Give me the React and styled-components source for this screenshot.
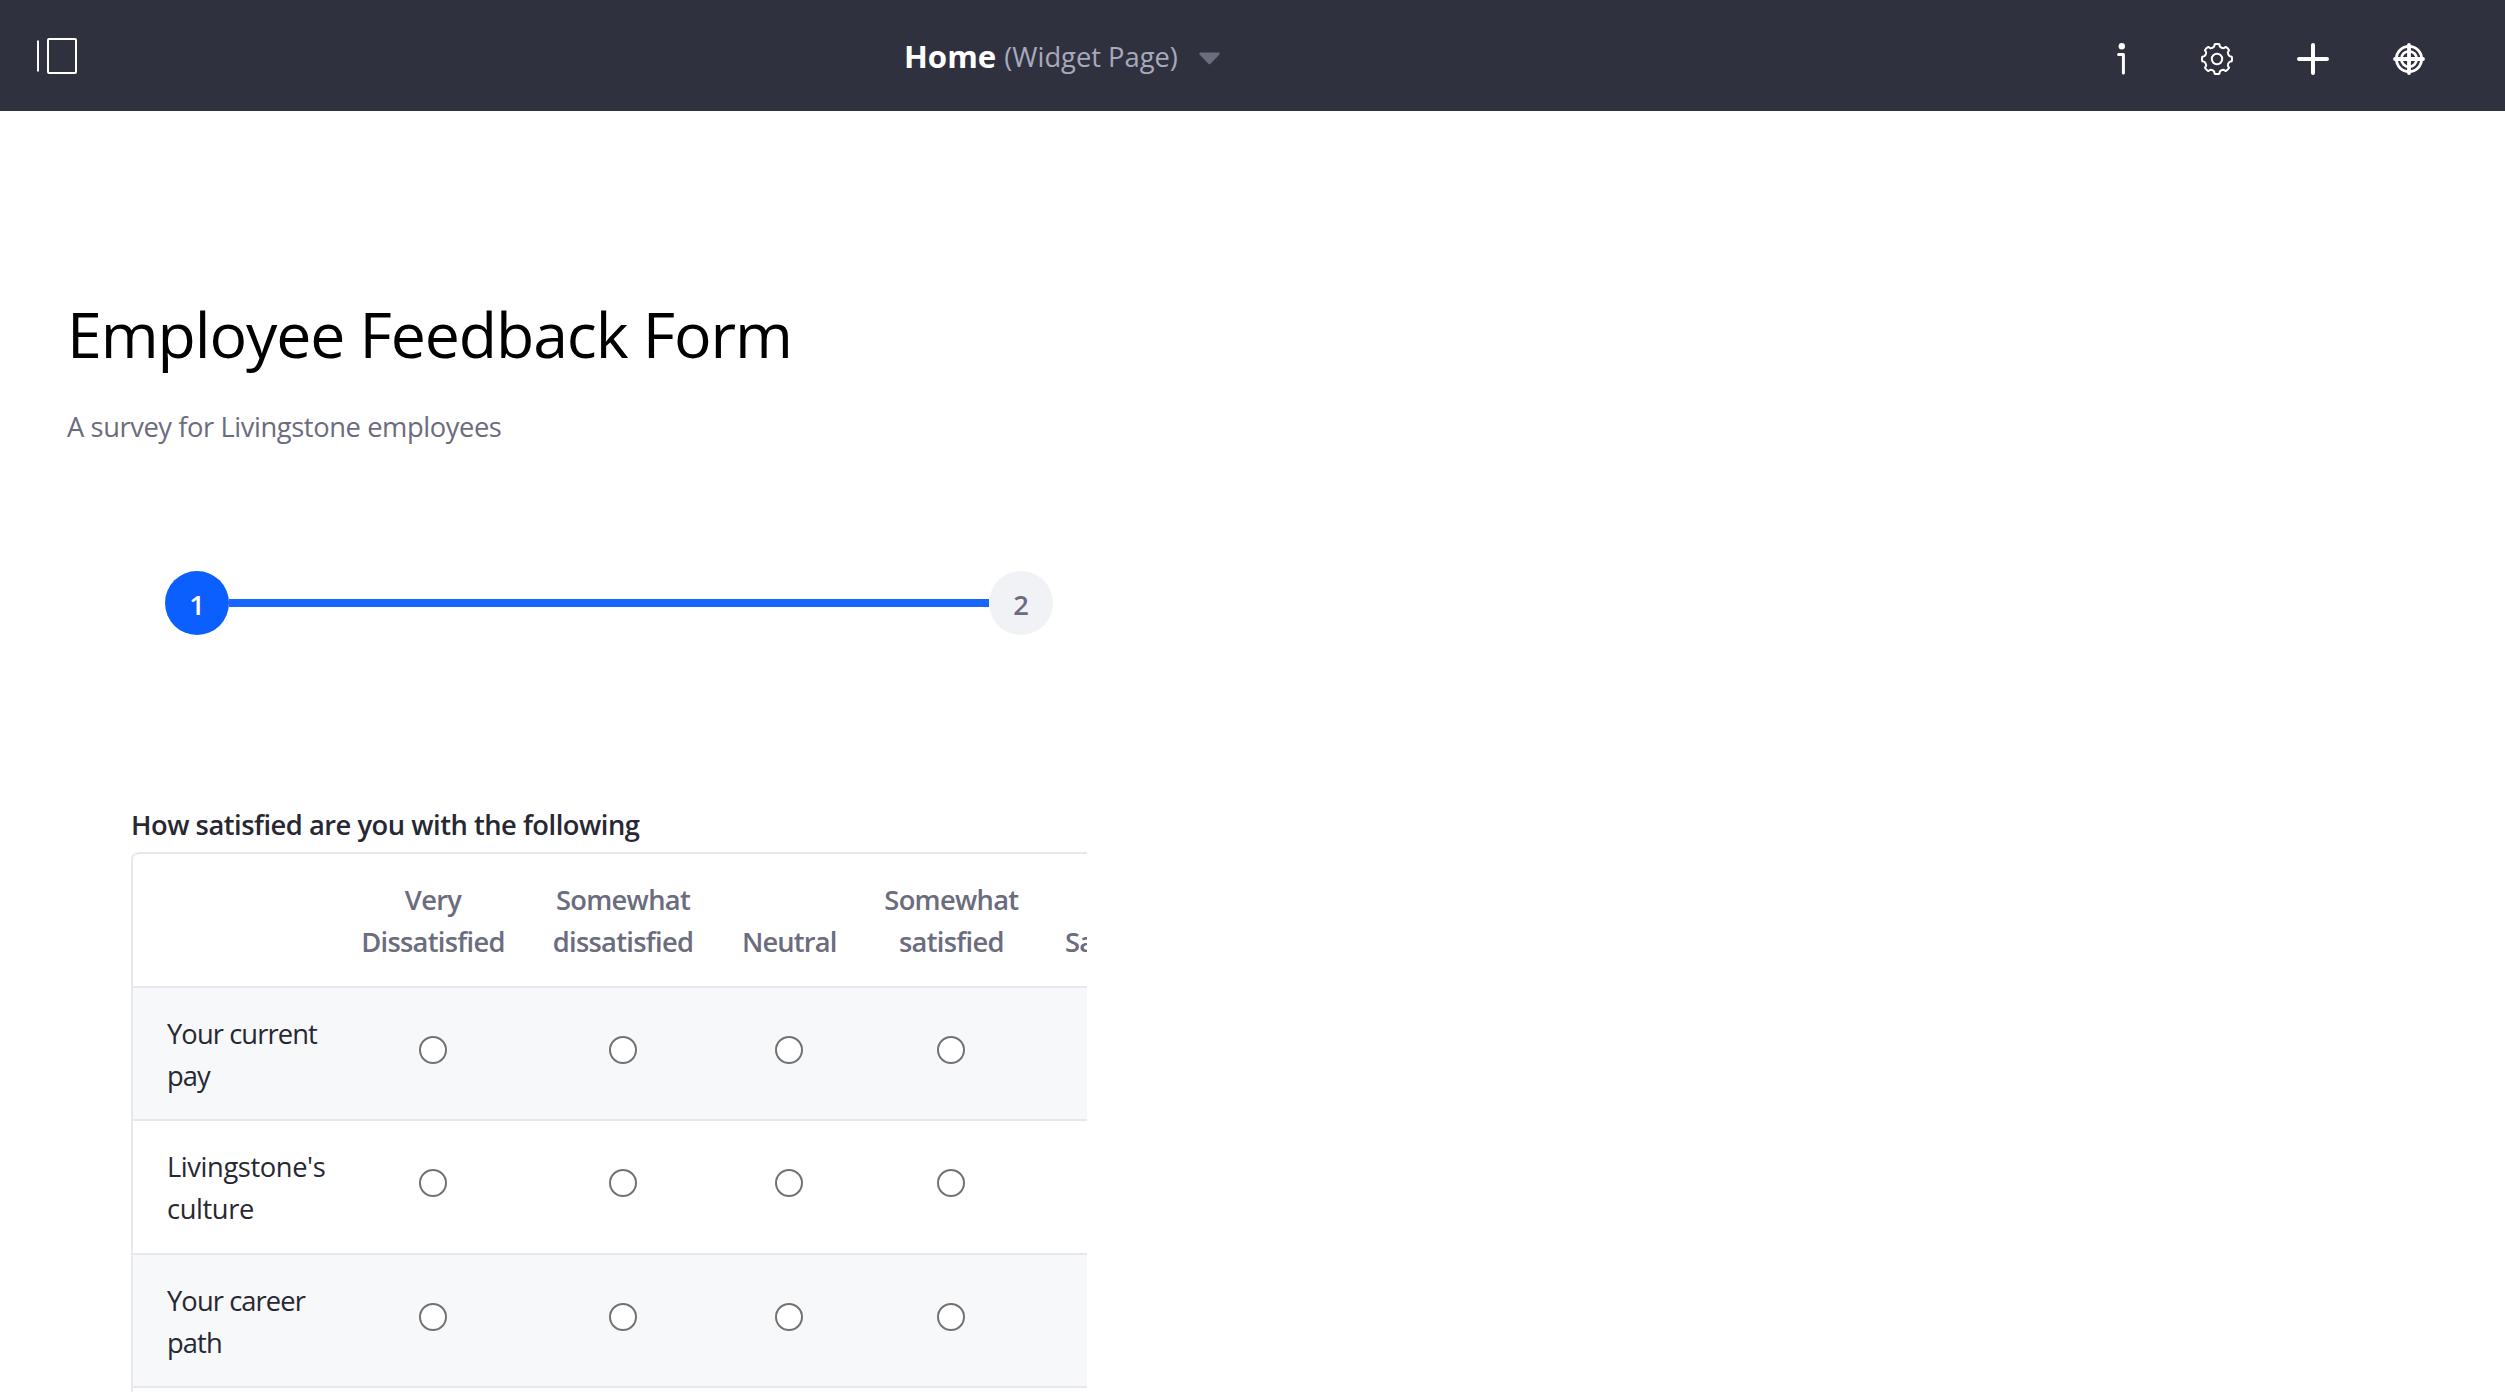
import React from "react";
import styled, { createGlobalStyle } from "styled-components";

const GlobalStyle = createGlobalStyle`
  * { box-sizing: border-box; }
  html, body { margin: 0; padding: 0; background: #fff; }
  body {
    height: 1392px;
    overflow: hidden;
    font-family: "Open Sans", "Noto Sans", sans-serif;
    font-size: 27.3px;
    line-height: 42px;
    color: #272833;
  }
`;

const Page = styled.div`
  display: flex;
  flex-direction: column;
  height: 1392px;
  overflow: hidden;
`;

const ControlBar = styled.header`
  display: grid;
  grid-template-columns: 867px 1fr auto;
  align-items: center;
  flex: none;
  height: 111px;
  padding: 0 80px 0 37px;
  background: #30313f;
`;

const MenuToggle = styled.button`
  justify-self: start;
  display: flex;
  margin-top: 1px;
  padding: 0;
  border: 0;
  background: none;
`;

const PageInfo = styled.div`
  display: flex;
  align-items: center;
  white-space: nowrap;
`;

const PageName = styled.strong`
  font-size: 31.2px;
  font-weight: 700;
  line-height: 42px;
  margin: 1px 8px 0 0;
  color: #fff;
`;

const PageType = styled.span`
  margin-top: 3px;
  color: #a7a9bc;
`;

const CaretIcon = styled.svg`
  margin: 6px 0 0 21px;
`;

const Actions = styled.nav`
  display: flex;
  gap: 64px;
  margin-top: 7px;
`;

const ActionButton = styled.button`
  display: flex;
  width: 32px;
  height: 32px;
  padding: 0;
  border: 0;
  background: none;
`;

const FormSection = styled.main`
  display: flex;
  flex-direction: column;
  width: 1087px;
  padding: 179px 0 0 67px;
`;

const Title = styled.h1`
  margin: 0;
  font-size: 62.6px;
  font-weight: 400;
  line-height: 88px;
  letter-spacing: -1.1px;
  color: #000;
  white-space: nowrap;
`;

const Description = styled.p`
  margin: 28px 0 0;
  letter-spacing: -0.41px;
  color: #6b6c7e;
`;

const Wizard = styled.ol`
  display: flex;
  align-items: center;
  list-style: none;
  margin: 123px 34px 0 98px;
  padding: 0;
`;

const Step = styled.li`
  display: flex;
  flex: none;
  align-items: center;
  justify-content: center;
  width: 64px;
  height: 64px;
  padding-top: 3px;
  border-radius: 50%;
  font-weight: 600;
  background: ${(p) => (p.$active ? "#0b5fff" : "#f1f2f5")};
  color: ${(p) => (p.$active ? "#fff" : "#6b6c7e")};
`;

const StepTrack = styled.li`
  flex: 1;
  height: 8px;
  background: #1966ff;
`;

const Field = styled.section`
  display: flex;
  flex-direction: column;
  margin: 169px 0 0 64px;
  overflow: hidden;
`;

const FieldLabel = styled.div`
  padding-bottom: 6px;
  font-weight: 600;
  letter-spacing: -0.48px;
  white-space: nowrap;
`;

const Grid = styled.div`
  width: 1180px;
  border: 2px solid #e7e7ed;
  border-top: 0;
  border-radius: 7px;
  overflow: hidden;
`;

const GridRow = styled.div`
  display: grid;
  grid-template-columns: 204.5px 191px 189px 143.4px 181px 1fr;
  height: 133.5px;
  border-top: 2px solid #e7e7ed;
  background: ${(p) => (p.$striped ? "#f7f8fa" : "#fff")};

  &:first-child { border-top-left-radius: 7px; }
`;

const HeaderCell = styled.div`
  display: flex;
  flex-direction: column;
  align-items: ${(p) => (p.$clipped ? "flex-start" : "center")};
  justify-content: flex-end;
  padding: ${(p) => (p.$clipped ? "0 0 23px 23px" : "0 0 23px")};
  font-weight: 600;
  letter-spacing: ${(p) => p.$tracking}px;
  color: #6b6c7e;
  white-space: nowrap;
`;

const RowLabel = styled.div`
  display: flex;
  flex-direction: column;
  padding: 25px 0 0 34px;
  letter-spacing: ${(p) => p.$tracking}px;
  white-space: nowrap;
`;

const OptionCell = styled.label`
  display: flex;
  align-items: flex-start;
  justify-content: center;
  padding-top: 48px;
`;

const Radio = styled.input.attrs({ type: "radio" })`
  appearance: none;
  width: 28px;
  height: 28px;
  margin: 0;
  border: 2px solid #727272;
  border-radius: 50%;
  background: #fff;
`;

const columns = [
  { lines: ["Very", "Dissatisfied"], tracking: -0.7 },
  { lines: ["Somewhat", "dissatisfied"], tracking: -0.7 },
  { lines: ["Neutral"], tracking: -0.85 },
  { lines: ["Somewhat", "satisfied"], tracking: -0.7 },
  { lines: ["Satisfied"], tracking: -0.7, clipped: true },
];

const rows = [
  { name: "pay", lines: ["Your current", "pay"], tracking: -0.9 },
  { name: "culture", lines: ["Livingstone's", "culture"], tracking: -0.4 },
  { name: "career", lines: ["Your career", "path"], tracking: -0.9 },
  { name: "next", lines: [], tracking: 0 },
];

function ProductMenuIcon() {
  return (
    <svg width="40" height="36" viewBox="0 0 40 36" fill="none" stroke="#fff" strokeWidth="2">
      <path d="M1 2.5v31" />
      <rect x="11" y="1" width="28" height="34" rx="1" />
    </svg>
  );
}

function InfoIcon() {
  return (
    <svg width="32" height="32" viewBox="0 0 32 32" fill="none" stroke="#fff">
      <circle cx="16.8" cy="3.2" r="3.2" fill="#fff" stroke="none" />
      <path d="M13.6 11.6h4.8v18.4" strokeWidth="3" strokeLinecap="round" strokeLinejoin="round" />
    </svg>
  );
}

function gearPath() {
  const point = (radius, degrees) => {
    const a = (degrees * Math.PI) / 180;
    return `${(16 + radius * Math.sin(a)).toFixed(2)} ${(16 - radius * Math.cos(a)).toFixed(2)}`;
  };
  let d = `M${point(14.9, -9)}`;
  for (let i = 0; i < 8; i += 1) {
    const a = i * 45;
    d += `Q${point(15.3, a)} ${point(14.9, a + 9)}L${point(12.8, a + 13)}`;
    d += `Q${point(11.6, a + 22.5)} ${point(12.8, a + 32)}L${point(14.9, a + 36)}`;
  }
  return `${d}Z`;
}

function GearIcon() {
  return (
    <svg width="32" height="32" viewBox="0 0 32 32" fill="none" stroke="#fff" strokeWidth="2" strokeLinejoin="round">
      <path d={gearPath()} />
      <circle cx="16" cy="16" r="5.2" />
    </svg>
  );
}

function PlusIcon() {
  return (
    <svg width="32" height="32" viewBox="0 0 32 32" stroke="#fff" strokeWidth="4" strokeLinecap="round">
      <path d="M16 2v28M2 16h28" />
    </svg>
  );
}

function TargetIcon() {
  return (
    <svg width="32" height="32" viewBox="0 0 32 32" fill="none" stroke="#fff">
      <circle cx="16" cy="16" r="12.6" strokeWidth="2.8" />
      <circle cx="16" cy="16" r="7.8" strokeWidth="2.6" />
      <path d="M16 2v28M2 16h28" strokeWidth="3.8" strokeLinecap="round" />
    </svg>
  );
}

export default function App() {
  return (
    <Page>
      <GlobalStyle />
      <ControlBar>
        <MenuToggle aria-label="Product Menu"><ProductMenuIcon /></MenuToggle>
        <PageInfo>
          <PageName>Home</PageName>
          <PageType>(Widget Page)</PageType>
          <CaretIcon width="21" height="13" viewBox="0 0 21 13" fill="#6b6c7e">
            <path d="M1.6 0.5h17.8c1.3 0 1.7 1.4 0.8 2.2l-8.6 9c-.7.7-1.5.7-2.2 0l-8.6-9c-.9-.8-.5-2.2.8-2.2z" />
          </CaretIcon>
        </PageInfo>
        <Actions>
          <ActionButton aria-label="Information"><InfoIcon /></ActionButton>
          <ActionButton aria-label="Configure"><GearIcon /></ActionButton>
          <ActionButton aria-label="Add"><PlusIcon /></ActionButton>
          <ActionButton aria-label="Simulation"><TargetIcon /></ActionButton>
        </Actions>
      </ControlBar>
      <FormSection>
        <Title>Employee Feedback Form</Title>
        <Description>A survey for Livingstone employees</Description>
        <Wizard>
          <Step $active>1</Step>
          <StepTrack />
          <Step>2</Step>
        </Wizard>
        <Field>
          <FieldLabel>How satisfied are you with the following</FieldLabel>
          <Grid>
            <GridRow>
              <span />
              {columns.map((column, i) => (
                <HeaderCell key={i} $tracking={column.tracking} $clipped={column.clipped}>
                  {column.lines.map((line) => <span key={line}>{line}</span>)}
                </HeaderCell>
              ))}
            </GridRow>
            {rows.map((row, r) => (
              <GridRow key={row.name} $striped={r % 2 === 0}>
                <RowLabel $tracking={row.tracking}>
                  {row.lines.map((line) => <span key={line}>{line}</span>)}
                </RowLabel>
                {columns.slice(0, 4).map((column, i) => (
                  <OptionCell key={i}><Radio name={row.name} /></OptionCell>
                ))}
              </GridRow>
            ))}
          </Grid>
        </Field>
      </FormSection>
    </Page>
  );
}
